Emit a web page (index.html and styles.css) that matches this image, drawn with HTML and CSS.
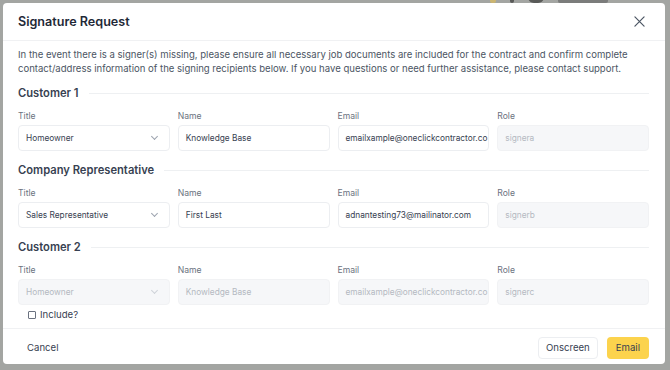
FILE: index.html
```html
<!DOCTYPE html>
<html>
	<head>
		<meta charset="utf-8">
		<title>Signature Request</title>
		<link rel="stylesheet" href="styles.css">
	</head>
	<body>
		<div class="behind">
			<span class="dot yellow"></span>
			<span class="dot dark"></span>
			<span class="dot dark wide"></span>
			<span class="dot name"></span>
		</div>

		<div class="modal">
			<div class="modal-head">
				<h1>Signature Request</h1>
				<button class="close" aria-label="Close">
					<svg width="11" height="11" viewBox="0 0 12 12"><path d="M1 1 L11 11 M11 1 L1 11" stroke="#4b5563" stroke-width="1.3" fill="none" stroke-linecap="round"/></svg>
				</button>
			</div>

			<div class="modal-body">
				<p class="intro">In the event there is a signer(s) missing, please ensure all necessary job documents are included for the contract and confirm complete contact/address information of the signing recipients below. If you have questions or need further assistance, please contact support.</p>

				<h2 class="section">Customer 1</h2>
				<div class="row">
					<label class="field">
						<span>Title</span>
						<div class="select">Homeowner<i class="chev"></i></div>
					</label>
					<label class="field">
						<span>Name</span>
						<div class="input">Knowledge Base</div>
					</label>
					<label class="field">
						<span>Email</span>
						<div class="input">emailxample@oneclickcontractor.co</div>
					</label>
					<label class="field">
						<span>Role</span>
						<div class="input off">signera</div>
					</label>
				</div>

				<h2 class="section">Company Representative</h2>
				<div class="row">
					<label class="field">
						<span>Title</span>
						<div class="select">Sales Representative<i class="chev"></i></div>
					</label>
					<label class="field">
						<span>Name</span>
						<div class="input">First Last</div>
					</label>
					<label class="field">
						<span>Email</span>
						<div class="input">adnantesting73@mailinator.com</div>
					</label>
					<label class="field">
						<span>Role</span>
						<div class="input off">signerb</div>
					</label>
				</div>

				<h2 class="section">Customer 2</h2>
				<div class="row">
					<label class="field">
						<span>Title</span>
						<div class="select off">Homeowner<i class="chev"></i></div>
					</label>
					<label class="field">
						<span>Name</span>
						<div class="input off">Knowledge Base</div>
					</label>
					<label class="field">
						<span>Email</span>
						<div class="input off">emailxample@oneclickcontractor.co</div>
					</label>
					<label class="field">
						<span>Role</span>
						<div class="input off">signerc</div>
					</label>
				</div>
				<label class="include"><i class="box"></i>Include?</label>
			</div>

			<div class="modal-foot">
				<button class="btn plain">Cancel</button>
				<div class="actions">
					<button class="btn outline">Onscreen</button>
					<button class="btn primary">Email</button>
				</div>
			</div>
		</div>
	</body>
</html>
```

FILE: styles.css
```css
* {
	box-sizing: border-box;
}

html, body {
	margin: 0;
	height: 100%;
}

body {
	background: #a3a5a2;
	font-family: Inter, "Noto Sans", sans-serif;
	color: #374151;
	padding: 3px 5px 0 3px;
	position: relative;
	overflow: hidden;
}

/* page peeking out above the backdrop */
.behind {
	position: absolute;
	top: -9px;
	left: 490px;
	display: flex;
	align-items: center;
	gap: 14px;
	opacity: 0.5;
}

.dot {
	width: 6px;
	height: 12px;
	border-radius: 2px;
}

.dot.yellow { background: #f4c542; }
.dot.dark { background: #111; width: 4px; }
.dot.dark.wide { width: 16px; border-radius: 6px; }
.dot.name { background: #555; width: 50px; height: 11px; }

.modal {
	background: #fff;
	border-radius: 4px;
	width: 662px;
	height: 361px;
	display: flex;
	flex-direction: column;
	position: relative;
}

.modal-head {
	flex: none;
	height: 38px;
	display: flex;
	align-items: center;
	justify-content: space-between;
	padding: 0 20px 0 15px;
	border-bottom: 1px solid #f0f1f3;
}

.modal-head h1 {
	margin: 0;
	font-size: 12.6px;
	font-weight: 600;
	color: #1f2937;
}

.close {
	border: 0;
	background: none;
	padding: 0;
	display: flex;
}

.modal-body {
	flex: 1;
	padding: 7px 16px 0 15px;
}

.intro {
	margin: 0 0 8px;
	font-size: 9.55px;
	line-height: 14px;
	color: #4b5563;
}

.section {
	margin: 0 0 7px;
	font-size: 11.2px;
	line-height: 18px;
	font-weight: 600;
	color: #374151;
	display: flex;
	align-items: center;
	gap: 10px;
}

.section::after {
	content: "";
	flex: 1;
	border-top: 1px solid #eef0f2;
}

.row {
	display: grid;
	grid-template-columns: repeat(4, minmax(0, 1fr));
	gap: 8px;
	margin-bottom: 10px;
}

.row:last-of-type {
	margin-bottom: 0;
}

.field {
	display: flex;
	flex-direction: column;
	gap: 2px;
}

.field span {
	font-size: 8.6px;
	line-height: 14px;
	color: #6b7280;
}

.input, .select {
	height: 26px;
	border: 1px solid #eceef1;
	border-radius: 4px;
	padding: 0 6px 0 7px;
	display: flex;
	align-items: center;
	font-size: 8.3px;
	color: #374151;
	white-space: nowrap;
	overflow: hidden;
}

.select {
	justify-content: space-between;
	padding-right: 12px;
}

.off {
	background: #f6f7f9;
	color: #b4b9c1;
	border-color: #f1f2f4;
}

.chev {
	width: 5px;
	height: 5px;
	border-right: 1px solid #9ca3af;
	border-bottom: 1px solid #9ca3af;
	transform: rotate(45deg);
	margin-top: -3px;
}

.select.off .chev {
	border-color: #cfd3d9;
}

.include {
	display: flex;
	align-items: center;
	gap: 4px;
	margin: 3px 0 0 10px;
	font-size: 9.6px;
	line-height: 14px;
	color: #374151;
}

.box {
	width: 8px;
	height: 8px;
	border: 1px solid #6b7280;
	border-radius: 1px;
}

.modal-foot {
	flex: none;
	height: 36px;
	border-top: 1px solid #f0f1f3;
	display: flex;
	align-items: center;
	justify-content: space-between;
	padding: 2px 16px 0 15px;
}

.actions {
	display: flex;
	gap: 9px;
}

.btn {
	font-family: inherit;
	font-size: 9.6px;
	height: 22px;
	border-radius: 4px;
	padding: 0 8px;
	border: 1px solid transparent;
	background: none;
	color: #374151;
}

.btn.plain {
	padding-left: 8px;
}

.btn.outline {
	border-color: #eceef1;
	background: #fff;
	padding: 0 7px;
}

.btn.primary {
	background: #fcd34d;
	color: #374151;
	padding: 0 8px;
}
```
